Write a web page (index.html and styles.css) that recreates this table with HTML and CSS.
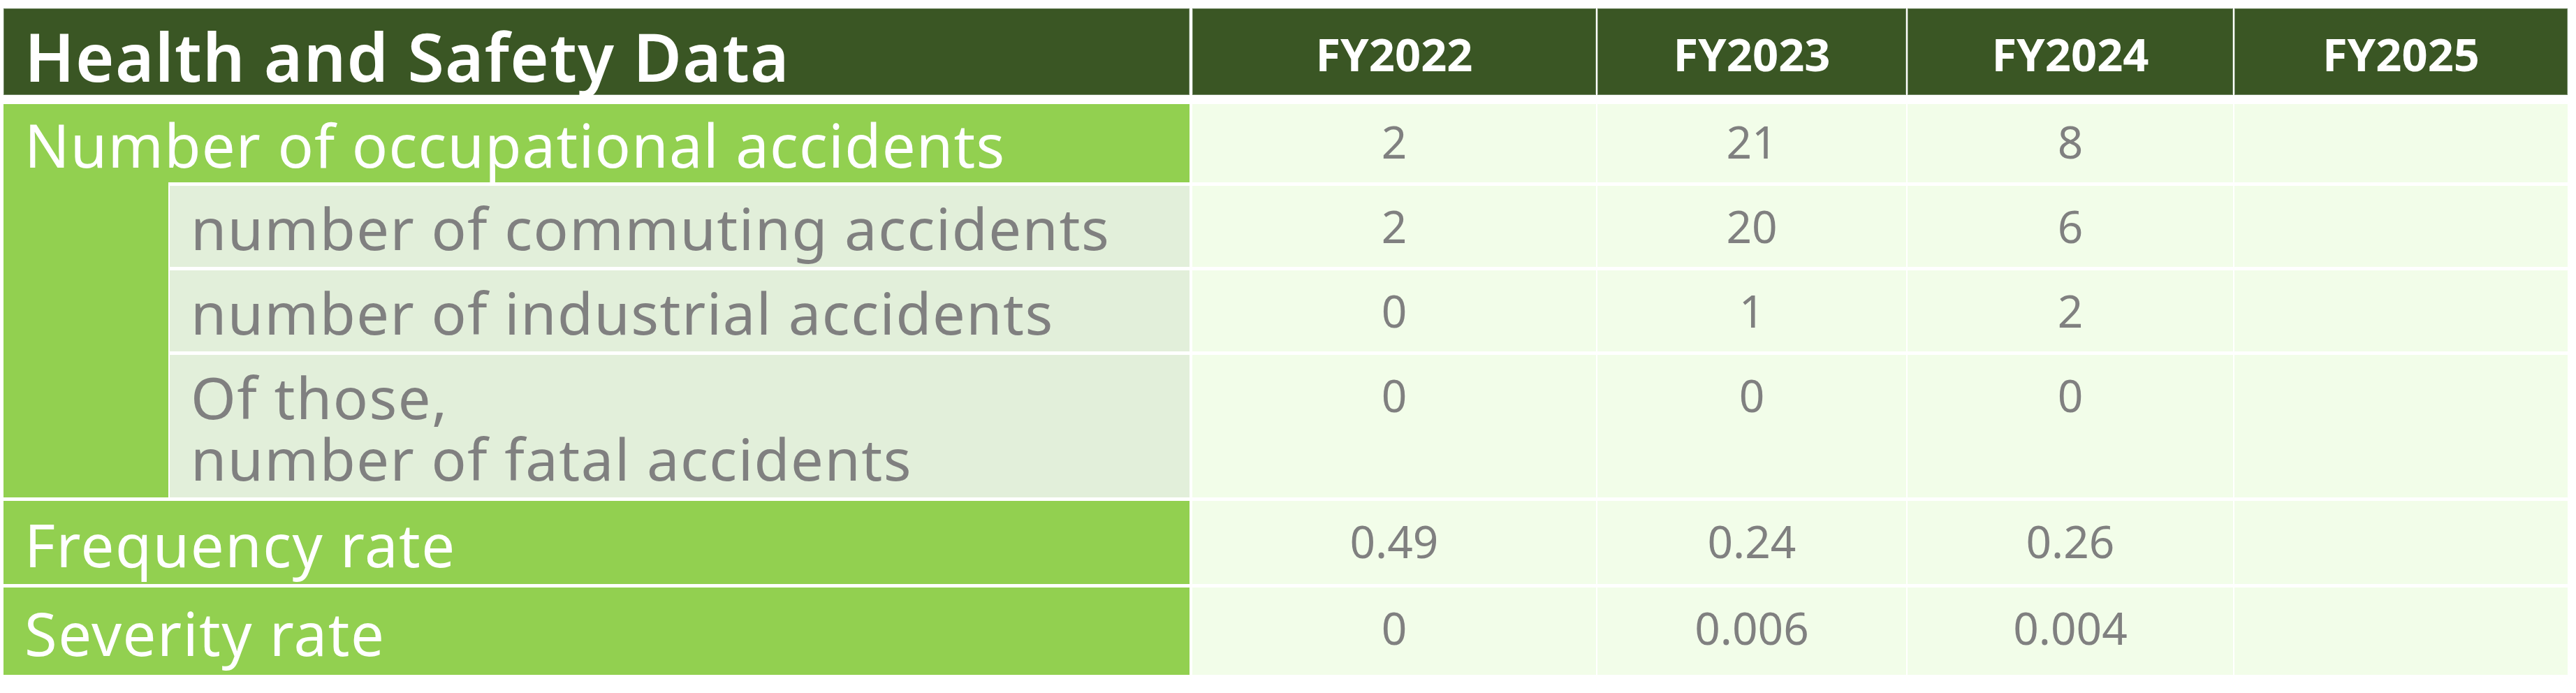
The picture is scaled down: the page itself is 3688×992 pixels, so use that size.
FILE: index.html
```html
<!DOCTYPE html>
<html lang="en">
<head>
<meta charset="utf-8">
<title>Health and Safety Data</title>
<link rel="stylesheet" href="styles.css">
</head>
<body>
<div class="table">
  <div class="hd hd-title">Health and Safety Data</div>
  <div class="hd hd-year">FY2022</div>
  <div class="hd hd-year">FY2023</div>
  <div class="hd hd-year">FY2024</div>
  <div class="hd hd-year">FY2025</div>

  <div class="lbl lbl-main r2">Number of occupational accidents</div>
  <div class="val r2">2</div>
  <div class="val r2">21</div>
  <div class="val r2">8</div>
  <div class="val r2"></div>

  <div class="strip"></div>
  <div class="lbl lbl-sub r3">number of commuting accidents</div>
  <div class="val r3">2</div>
  <div class="val r3">20</div>
  <div class="val r3">6</div>
  <div class="val r3"></div>

  <div class="lbl lbl-sub r4">number of industrial accidents</div>
  <div class="val r4">0</div>
  <div class="val r4">1</div>
  <div class="val r4">2</div>
  <div class="val r4"></div>

  <div class="lbl lbl-sub r5">Of those,<br>number of fatal accidents</div>
  <div class="val r5">0</div>
  <div class="val r5">0</div>
  <div class="val r5">0</div>
  <div class="val r5"></div>

  <div class="lbl lbl-main r6">Frequency rate</div>
  <div class="val r6">0.49</div>
  <div class="val r6">0.24</div>
  <div class="val r6">0.26</div>
  <div class="val r6"></div>

  <div class="lbl lbl-main r7">Severity rate</div>
  <div class="val r7">0</div>
  <div class="val r7">0.006</div>
  <div class="val r7">0.004</div>
  <div class="val r7"></div>
</div>
</body>
</html>
```

FILE: styles.css
```css
html, body {
  margin: 0;
  padding: 0;
  background: #ffffff;
}
body {
  padding: 12px 0 0 5px;
  font-family: "Noto Sans", "Open Sans", sans-serif;
}
.table {
  display: grid;
  grid-template-columns: 236px 1462px 578px 442px 466px 477px;
  grid-template-rows: 132px 112px 116px 116px 204px 119px 125px;
  column-gap: 2px;
  row-gap: 5px;
}
.hd {
  background: #3a5624;
  color: #ffffff;
  margin-bottom: 8px;
  display: flex;
  align-items: center;
  box-shadow: inset 0 0 0 1px #6d8460;
}
.hd-title {
  grid-column: 1 / 3;
  margin-right: 2px;
  font-size: 95px;
  font-weight: 600;
  line-height: 100px;
  letter-spacing: 1.3px;
  padding: 12px 0 0 30px;
}
.hd-year {
  justify-content: center;
  font-size: 65px;
  font-weight: 700;
  line-height: 80px;
  padding-top: 5px;
}
.strip {
  grid-column: 1;
  grid-row: 3 / 6;
  margin-top: -5px;
  background: #92d050;
}
.lbl {
  display: flex;
  flex-direction: column;
  justify-content: center;
  margin-right: 2px;
  padding-top: 4px;
  letter-spacing: 1.2px;
}
.lbl-main {
  grid-column: 1 / 3;
  background: #92d050;
  color: #ffffff;
  font-size: 85px;
  line-height: 100px;
  padding-left: 30px;
}
.lbl-main.r6, .lbl-main.r7 {
  letter-spacing: 1.5px;
}
.lbl-sub {
  grid-column: 2;
  background: #e2efda;
  color: #808080;
  font-size: 83px;
  line-height: 88px;
  letter-spacing: 1.5px;
  padding-left: 30px;
}
.val {
  background: #f2fde9;
  color: #808080;
  font-size: 64px;
  line-height: 88px;
  padding-top: 14px;
  text-align: center;
}
.r2 { grid-row: 2; }
.r3 { grid-row: 3; }
.r4 { grid-row: 4; }
.r5 { grid-row: 5; }
.r6 { grid-row: 6; }
.r7 { grid-row: 7; }
.val.r2 { padding-top: 10px; }
```
